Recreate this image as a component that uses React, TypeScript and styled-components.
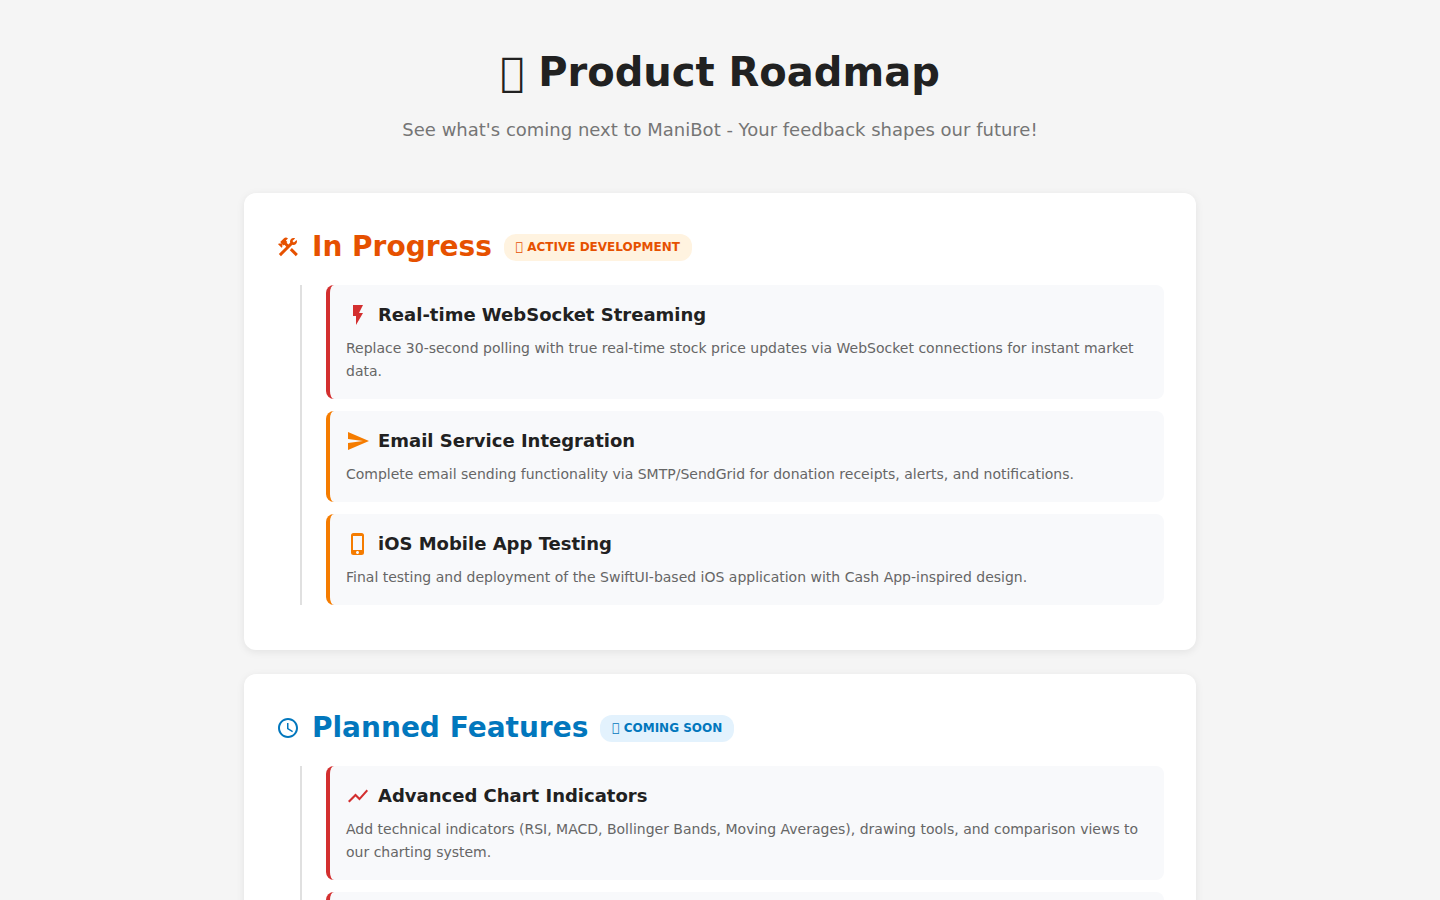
import React from "react";
import styled, { createGlobalStyle } from "styled-components";
import type { IconType } from "react-icons";
import {
  MdConstruction,
  MdFlashOn,
  MdPhoneIphone,
  MdSchedule,
  MdSend,
  MdShowChart,
} from "react-icons/md";

const GlobalStyle = createGlobalStyle`
  *, *::before, *::after { box-sizing: border-box; }
  body {
    margin: 0;
    background: #f5f5f5;
    color: #212121;
    font-family: "DejaVu Sans", sans-serif;
    font-size: 16px;
  }
`;

const priorityColors = { high: "#d32f2f", medium: "#f57c00" };
const tones = {
  progress: { text: "#e65100", soft: "#fff3e0" },
  planned: { text: "#0277bd", soft: "#e3f2fd" },
};

type Priority = keyof typeof priorityColors;
type Tone = keyof typeof tones;

// A code point with no glyph in any font, shown as an empty box.
const BOX = "\u{F8000}";

const Page = styled.main`
  max-width: 1000px;
  margin: 0 auto;
  padding: 40px 24px;
`;

const PageHeader = styled.header`
  margin-bottom: 49px;
  text-align: center;
`;

const PageTitle = styled.h1`
  margin: 0 0 12px;
  font-size: 40px;
  line-height: 64px;
  font-weight: 700;
`;

const Subtitle = styled.p`
  margin: 0;
  color: #757575;
  font-size: 18px;
  line-height: 28px;
`;

const Card = styled.section`
  margin-bottom: 24px;
  padding: 32px 32px 45px;
  border-radius: 12px;
  background: #fff;
  box-shadow: 0 2px 8px rgba(0, 0, 0, 0.08);
`;

const CardHeader = styled.div<{ $tone: Tone }>`
  display: flex;
  align-items: center;
  gap: 12px;
  margin-bottom: 16px;
  color: ${({ $tone }) => tones[$tone].text};
`;

const CardTitle = styled.h2`
  margin: 0;
  font-size: 28px;
  line-height: 44px;
  font-weight: 700;
`;

const Badge = styled.span<{ $tone: Tone }>`
  padding: 4px 12px;
  border-radius: 12px;
  background: ${({ $tone }) => tones[$tone].soft};
  font-size: 12px;
  line-height: 19px;
  font-weight: 600;
  text-transform: uppercase;
`;

const Timeline = styled.ul`
  display: flex;
  flex-direction: column;
  gap: 12px;
  margin: 0 0 0 24px;
  padding: 0 0 0 24px;
  border-left: 2px solid #e0e0e0;
  list-style: none;
`;

const Item = styled.li<{ $priority: Priority }>`
  padding: 16px;
  border-left: 4px solid ${({ $priority }) => priorityColors[$priority]};
  border-radius: 8px;
  background: #f8f9fb;
`;

const ItemHeader = styled.div<{ $priority: Priority }>`
  display: flex;
  align-items: center;
  gap: 8px;
  margin-bottom: 8px;

  svg {
    color: ${({ $priority }) => priorityColors[$priority]};
  }
`;

const ItemTitle = styled.h3`
  margin: 0;
  font-size: 18px;
  line-height: 28px;
  font-weight: 600;
`;

const ItemText = styled.p`
  margin: 0;
  color: #666;
  font-size: 14px;
  line-height: 23px;
`;

interface Feature {
  priority: Priority;
  icon?: IconType;
  title?: string;
  text?: string;
}

interface Section {
  tone: Tone;
  icon: IconType;
  title: string;
  badge: string;
  features: Feature[];
}

const sections: Section[] = [
  {
    tone: "progress",
    icon: MdConstruction,
    title: "In Progress",
    badge: `${BOX} Active Development`,
    features: [
      {
        priority: "high",
        icon: MdFlashOn,
        title: "Real-time WebSocket Streaming",
        text: "Replace 30-second polling with true real-time stock price updates via WebSocket connections for instant market data.",
      },
      {
        priority: "medium",
        icon: MdSend,
        title: "Email Service Integration",
        text: "Complete email sending functionality via SMTP/SendGrid for donation receipts, alerts, and notifications.",
      },
      {
        priority: "medium",
        icon: MdPhoneIphone,
        title: "iOS Mobile App Testing",
        text: "Final testing and deployment of the SwiftUI-based iOS application with Cash App-inspired design.",
      },
    ],
  },
  {
    tone: "planned",
    icon: MdSchedule,
    title: "Planned Features",
    badge: `${BOX} Coming Soon`,
    features: [
      {
        priority: "high",
        icon: MdShowChart,
        title: "Advanced Chart Indicators",
        text: "Add technical indicators (RSI, MACD, Bollinger Bands, Moving Averages), drawing tools, and comparison views to our charting system.",
      },
      { priority: "high" },
    ],
  },
];

function FeatureItem({ priority, icon: Icon, title, text }: Feature) {
  return (
    <Item $priority={priority}>
      {title && (
        <ItemHeader $priority={priority}>
          {Icon && <Icon size={24} aria-hidden />}
          <ItemTitle>{title}</ItemTitle>
        </ItemHeader>
      )}
      {text && <ItemText>{text}</ItemText>}
    </Item>
  );
}

export default function App() {
  return (
    <>
      <GlobalStyle />
      <Page>
        <PageHeader>
          <PageTitle>{BOX} Product Roadmap</PageTitle>
          <Subtitle>
            See what's coming next to ManiBot - Your feedback shapes our future!
          </Subtitle>
        </PageHeader>
        {sections.map(({ tone, icon: Icon, title, badge, features }) => (
          <Card key={title}>
            <CardHeader $tone={tone}>
              <Icon size={24} aria-hidden />
              <CardTitle>{title}</CardTitle>
              <Badge $tone={tone}>{badge}</Badge>
            </CardHeader>
            <Timeline>
              {features.map((feature, index) => (
                <FeatureItem key={index} {...feature} />
              ))}
            </Timeline>
          </Card>
        ))}
      </Page>
    </>
  );
}
